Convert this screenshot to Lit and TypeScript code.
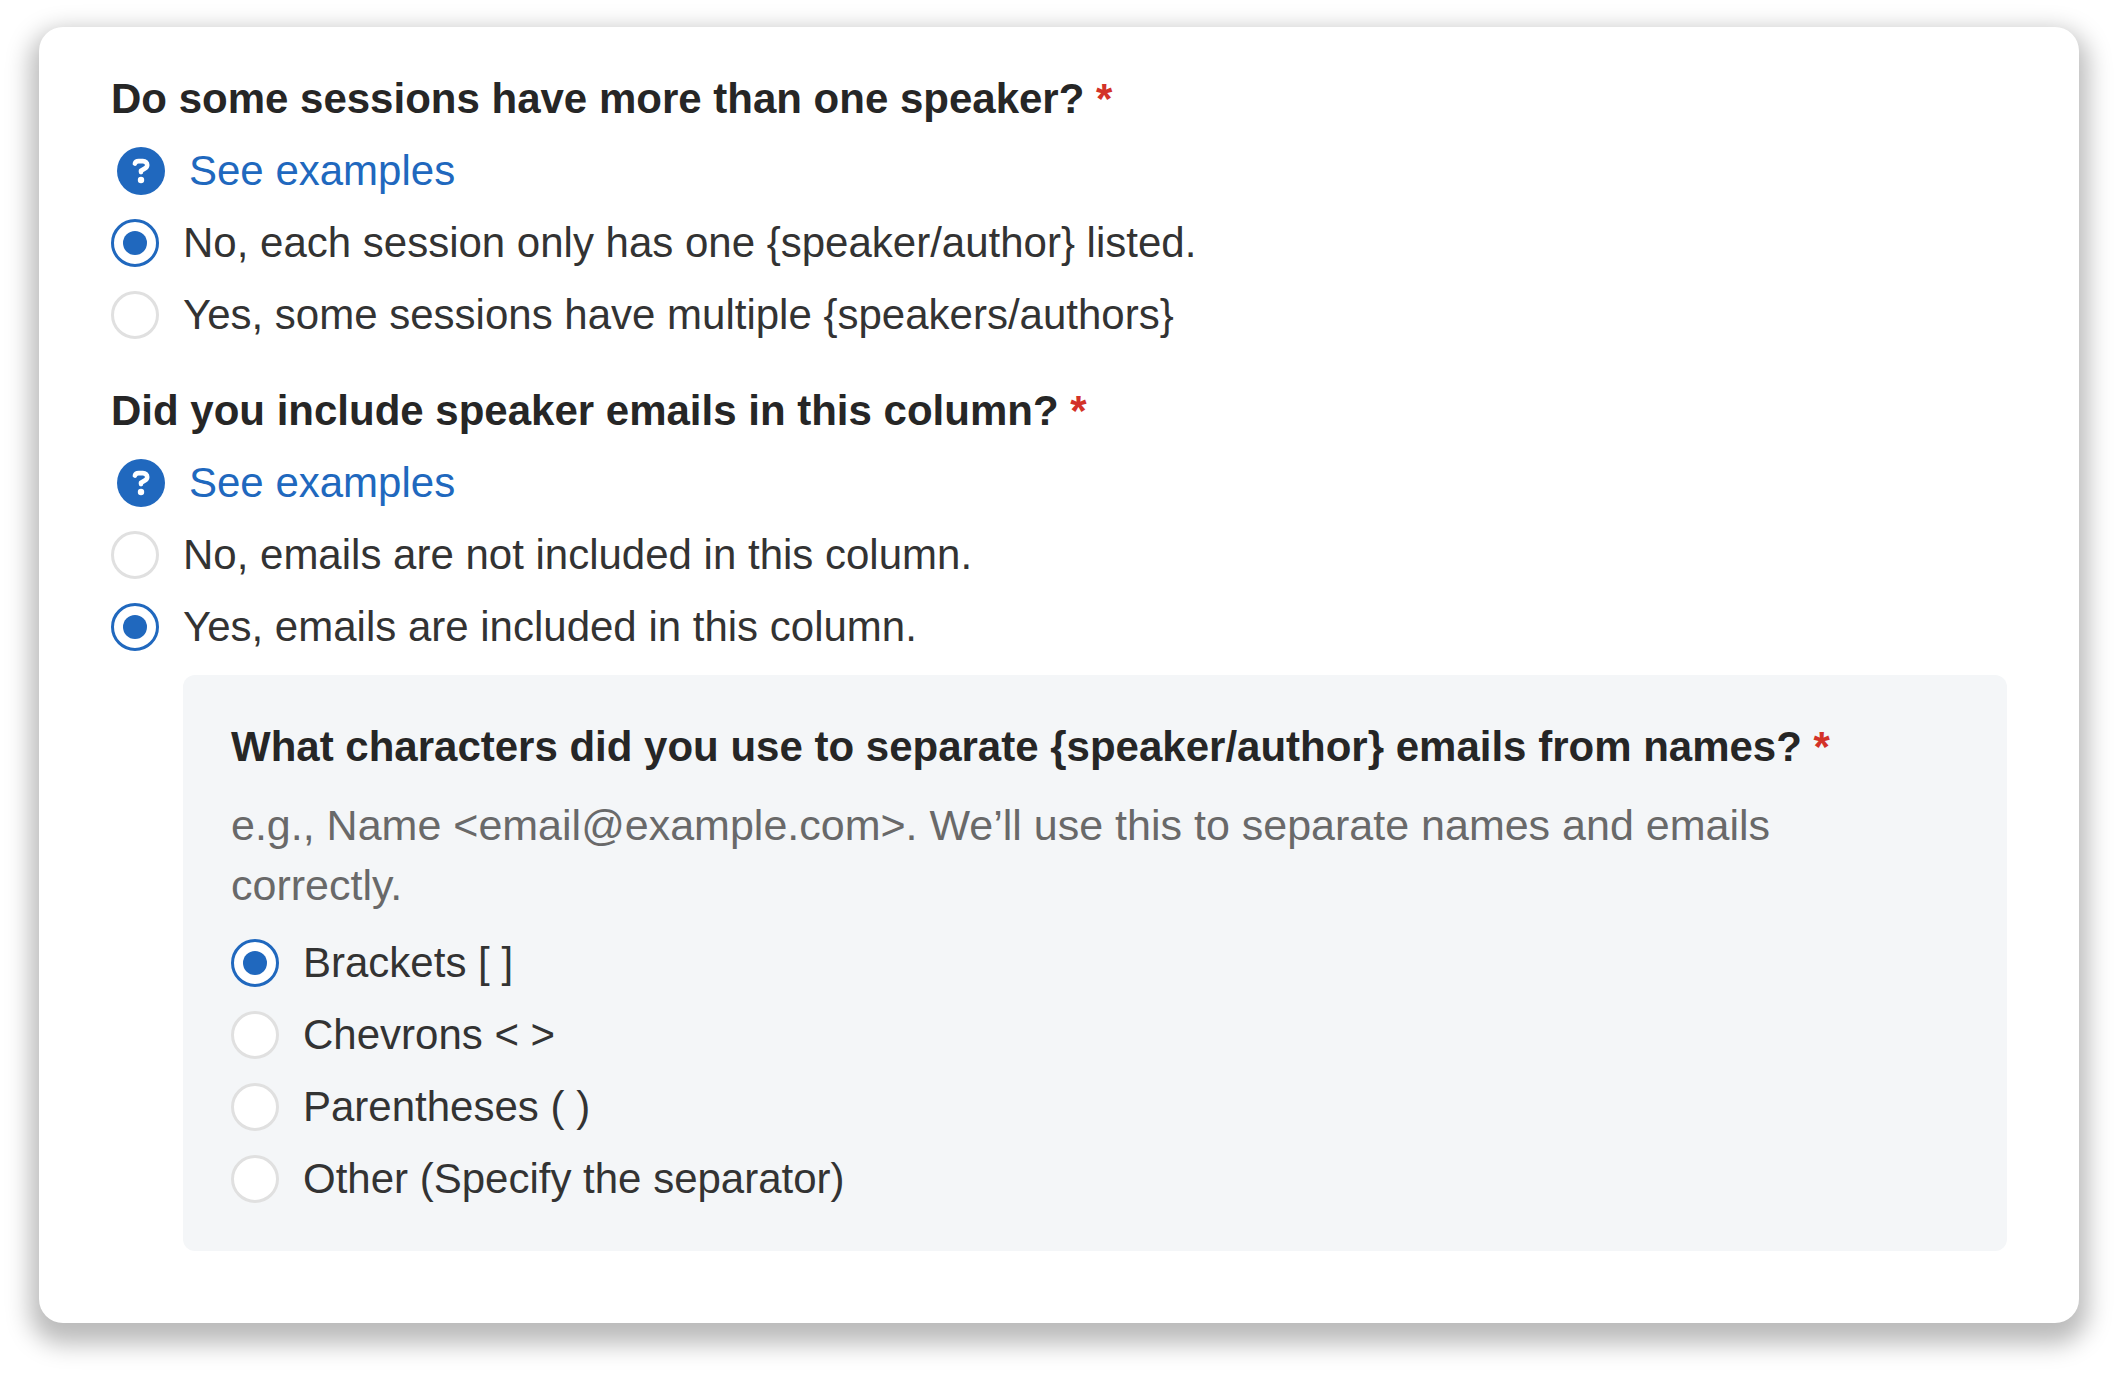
import { LitElement, html, css, svg, nothing, type TemplateResult } from "lit";
import { customElement, property, state } from "lit/decorators.js";

interface Option {
  value: string;
  label: string;
}

const SPEAKER_OPTIONS: Option[] = [
  { value: "single", label: "No, each session only has one {speaker/author} listed." },
  { value: "multiple", label: "Yes, some sessions have multiple {speakers/authors}" },
];

const EMAIL_OPTIONS: Option[] = [
  { value: "no", label: "No, emails are not included in this column." },
  { value: "yes", label: "Yes, emails are included in this column." },
];

const SEPARATOR_OPTIONS: Option[] = [
  { value: "brackets", label: "Brackets [ ]" },
  { value: "chevrons", label: "Chevrons < >" },
  { value: "parentheses", label: "Parentheses ( )" },
  { value: "other", label: "Other (Specify the separator)" },
];

const helpIcon = svg`
  <svg class="help-icon" viewBox="0 0 48 48" aria-hidden="true">
    <circle cx="24" cy="24" r="24" fill="currentColor"></circle>
    <path d="M17.9 16.6C18.4 14.9 19.8 14.1 21.6 14.1H25.9C28.6 14.1 30.2 15.7 30.2 17.9C30.2 19.4 29.5 20.4 28.2 21.2L24 23.8V25.1"
      fill="none" stroke="#fff" stroke-width="4.6" stroke-linecap="round" stroke-linejoin="round"></path>
    <circle cx="24" cy="33" r="3.2" fill="#fff"></circle>
  </svg>`;

@customElement("question-group")
export class QuestionGroup extends LitElement {
  @property() heading = "";
  @property() hint = "";
  @property() name = "";
  @property() value = "";
  @property({ type: Boolean }) examples = false;
  @property({ attribute: false }) options: Option[] = [];

  static styles = css`
    :host {
      display: block;
    }
    .group {
      display: flex;
      flex-direction: column;
      gap: 24px;
    }
    .heading {
      margin: 0;
      font-size: 42px;
      line-height: 48px;
      font-weight: 700;
      color: #262626;
    }
    .required {
      color: #d33228;
    }
    .hint {
      margin: 0;
      padding-right: 48px;
      font-size: 43px;
      line-height: 60px;
      color: #696969;
    }
    .examples {
      display: flex;
      align-items: center;
      align-self: flex-start;
      gap: 24px;
      padding-left: 6px;
      line-height: 48px;
      color: #2068be;
      text-decoration: none;
    }
    .help-icon {
      flex: none;
      width: 48px;
      height: 48px;
    }
    .option {
      display: flex;
      align-items: center;
      align-self: flex-start;
      gap: 24px;
      line-height: 48px;
      color: #333;
      cursor: pointer;
    }
    .radio {
      appearance: none;
      flex: none;
      display: grid;
      place-content: center;
      box-sizing: border-box;
      width: 48px;
      height: 48px;
      margin: 0;
      border: 3px solid #e0e0e0;
      border-radius: 50%;
      background: #fff;
      cursor: pointer;
    }
    .radio:checked {
      border-color: #2068be;
    }
    .radio:checked::before {
      content: "";
      width: 24px;
      height: 24px;
      border-radius: 50%;
      background: #2068be;
    }
  `;

  private select(value: string) {
    this.value = value;
    this.dispatchEvent(new CustomEvent("value-change", { detail: value }));
  }

  render(): TemplateResult {
    return html`
      <div class="group" role="radiogroup" aria-labelledby="heading">
        <h2 class="heading" id="heading">${this.heading} <span class="required">*</span></h2>
        ${this.hint ? html`<p class="hint">${this.hint}</p>` : nothing}
        ${this.examples
          ? html`<a class="examples" href="#examples">${helpIcon}<span>See examples</span></a>`
          : nothing}
        ${this.options.map(
          (o) => html`
            <label class="option">
              <input
                class="radio"
                type="radio"
                name=${this.name}
                value=${o.value}
                .checked=${o.value === this.value}
                @change=${() => this.select(o.value)}
              />
              <span>${o.label}</span>
            </label>
          `
        )}
      </div>
    `;
  }
}

@customElement("app-root")
export class AppRoot extends LitElement {
  @state() private hasEmails = "yes";

  static styles = css`
    :host {
      display: block;
      box-sizing: border-box;
      min-height: 100vh;
      padding: 27px 39px 51px;
      background: #fff;
      font-family: "Liberation Sans", Arial, sans-serif;
      font-size: 42px;
    }
    .card {
      display: flex;
      flex-direction: column;
      gap: 48px;
      padding: 48px 72px 72px;
      border-radius: 24px;
      background: #fff;
      box-shadow: 0 12px 24px 9px rgba(0, 0, 0, 0.27);
    }
    .emails {
      display: flex;
      flex-direction: column;
      gap: 24px;
    }
    .panel {
      margin-left: 72px;
      padding: 48px;
      border-radius: 12px;
      background: #f4f6f8;
    }
  `;

  render(): TemplateResult {
    return html`
      <form class="card">
        <question-group
          heading="Do some sessions have more than one speaker?"
          name="speakers"
          value="single"
          examples
          .options=${SPEAKER_OPTIONS}
        ></question-group>
        <div class="emails">
          <question-group
            heading="Did you include speaker emails in this column?"
            name="emails"
            .value=${this.hasEmails}
            examples
            .options=${EMAIL_OPTIONS}
            @value-change=${(e: CustomEvent<string>) => (this.hasEmails = e.detail)}
          ></question-group>
          ${this.hasEmails === "yes"
            ? html`<div class="panel">
                <question-group
                  heading="What characters did you use to separate {speaker/author} emails from names?"
                  hint="e.g., Name <email@example.com>. We’ll use this to separate names and emails correctly."
                  name="separator"
                  value="brackets"
                  .options=${SEPARATOR_OPTIONS}
                ></question-group>
              </div>`
            : nothing}
        </div>
      </form>
    `;
  }
}
